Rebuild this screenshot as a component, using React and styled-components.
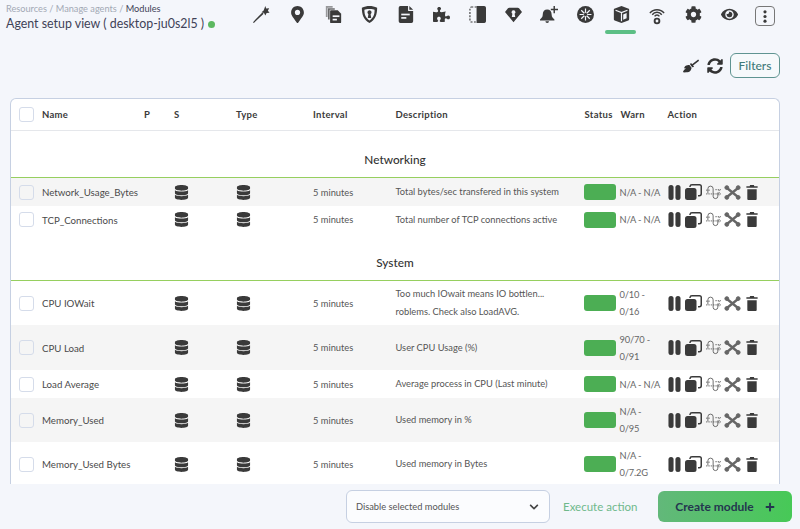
import React from 'react'
import styled, { createGlobalStyle } from 'styled-components'
import { FaDatabase, FaMapMarkerAlt, FaPuzzlePiece, FaCog, FaEye, FaBroom, FaSyncAlt, FaPlus, FaChevronDown } from 'react-icons/fa'

const Global = createGlobalStyle`
  html, body { margin: 0; padding: 0; }
  body {
    background: #f4f6fb;
    font-family: Lato, "Open Sans", sans-serif;
    color: #3b3b3b;
  }
  * { box-sizing: border-box; }
`

// small hand drawn icons for what the icon packs don't have
const Wand = () => (
  <svg viewBox="0 0 20 20" width="17" height="17" fill="currentColor">
    <path d="M1 20l-1-1L11 7.500l1.500 1.500z" />
    <path d="M14.500 0l1 3 3.500-.5-1.500 3 2 2.500-3.500.3-1.500 3-1.500-3-3-1 2.500-2z" />
  </svg>
)
const Docs = () => (
  <svg viewBox="0 0 20 20" width="17" height="17" fill="currentColor">
    <path d="M1 0h8v2H3v11H1z" opacity=".5" />
    <path d="M3.500 2.500h8v2H5.500V16h-2z" opacity=".75" />
    <path d="M7 5h8l4 4v10a1 1 0 0 1-1 1H7a1 1 0 0 1-1-1V6a1 1 0 0 1 1-1z" />
    <rect x="9" y="11" width="8" height="2" fill="#f4f6fb" />
    <rect x="9" y="15" width="5" height="2" fill="#f4f6fb" />
  </svg>
)
const Shield = () => (
  <svg viewBox="0 0 20 20" width="17" height="17" fill="currentColor">
    <path fillRule="evenodd" d="M10 0c3 0 6 .8 9 2 0 8-2 14-9 18C3 16 1 10 1 2c3-1.200 6-2 9-2zm0 3.500c-3 0-5 .6-6 1 0 6 1.500 9.500 6 12.500 4.500-3 6-6.500 6-12.500-1-.4-3-1-6-1z" />
    <path d="M10 5a2.500 2.500 0 0 1 1.300 4.600L12 14H8l.7-4.400A2.500 2.500 0 0 1 10 5z" />
  </svg>
)
const FileDoc = () => (
  <svg viewBox="0 0 20 20" width="17" height="17" fill="currentColor">
    <path d="M4 0h8l1 0v5a1 1 0 0 0 1 1h5v12a2 2 0 0 1-2 2H4a2 2 0 0 1-2-2V2a2 2 0 0 1 2-2z" />
    <path d="M14.500 0L19 4.500h-4.500z" />
    <rect x="5" y="9" width="10" height="2" fill="#f4f6fb" />
    <rect x="5" y="13" width="6" height="2" fill="#f4f6fb" />
  </svg>
)
const HalfBox = () => (
  <svg viewBox="0 0 18 18" width="17" height="17" fill="currentColor">
    <rect x="1" y="1" width="16" height="16" rx="1.500" fill="none" stroke="currentColor" strokeWidth="1.200" strokeDasharray="2 1.500" />
    <path d="M8 0h8a2 2 0 0 1 2 2v14a2 2 0 0 1-2 2H8z" />
  </svg>
)
const DiamondKey = () => (
  <svg viewBox="0 0 20 20" width="17" height="17" fill="currentColor">
    <path fillRule="evenodd" d="M5 2h10a2 2 0 0 1 1.500.7L20 7 10 19 0 7l3.500-4.300A2 2 0 0 1 5 2zm5 3a2.300 2.300 0 0 0-1.300 4.200L8 13h4l-.7-3.800A2.300 2.300 0 0 0 10 5z" />
  </svg>
)
const BellPlus = () => (
  <svg viewBox="0 0 20 20" width="18" height="18" fill="currentColor">
    <path d="M8 4c3 0 5 2 5 6 0 2 1 3 3 5v1H0v-1c2-2 3-3 3-5 0-4 2-6 5-6z" />
    <path d="M6 17h4a2 2 0 0 1-4 0z" />
    <path d="M15 0h1.600v3H20v1.600h-3.400V8H15V4.600h-3V3h3z" />
  </svg>
)
const Wheel = () => (
  <svg viewBox="0 0 20 20" width="17" height="17">
    <circle cx="10" cy="10" r="10" fill="currentColor" />
    <g stroke="#f4f6fb" strokeWidth="1.400">
      <path d="M10 3v14M3 10h14M5 5l10 10M15 5L5 15" />
    </g>
    <circle cx="10" cy="10" r="2" fill="currentColor" />
  </svg>
)
const Cube = () => (
  <svg viewBox="0 0 20 20" width="17" height="17" fill="currentColor">
    <path d="M10 0l8.500 3.300a1 1 0 0 1 .5.700v11.500a1.500 1.500 0 0 1-1 1.500l-8 3-8-3a1.500 1.500 0 0 1-1-1.500V4a1 1 0 0 1 .5-.7z" />
    <path d="M3 5l7 2.800L17 5M10 7.800V18" fill="none" stroke="#f4f6fb" strokeWidth="1.400" />
    <path d="M12 10l4-1.700v6.200l-4 1.700z" fill="#f4f6fb" />
  </svg>
)
const WifiGear = () => (
  <svg viewBox="0 0 20 24" width="16" height="19" fill="none" stroke="currentColor" strokeWidth="1.800">
    <path d="M1 9a11.500 11.500 0 0 1 18 0" />
    <path d="M4 11a7.500 7.500 0 0 1 12 0" />
    <path d="M7 13a3.500 3.500 0 0 1 6 0" />
    <circle cx="10" cy="19" r="3" strokeWidth="2.400" />
  </svg>
)
const Pause = () => (
  <svg viewBox="0 0 14 16" width="13" height="15" fill="currentColor">
    <rect x="0.500" y="0" width="5.500" height="16" rx="2.700" />
    <rect x="8" y="0" width="5.500" height="16" rx="2.700" />
  </svg>
)
const CloneIcon = () => (
  <svg viewBox="0 0 17 16" width="17" height="16" fill="currentColor">
    <path d="M5 3v-.5A2 2 0 0 1 7 .750h7.500a1.800 1.800 0 0 1 1.750 2v7a2 2 0 0 1-2 2H13" fill="none" stroke="currentColor" strokeWidth="1.500" />
    <rect x="0" y="4" width="11.500" height="12" rx="2.500" />
  </svg>
)
const Wave = () => (
  <svg viewBox="0 0 18 16" width="17" height="15" fill="none" stroke="#555" strokeWidth=".9">
    <path d="M1 9.500h16" strokeDasharray="1.500 1" />
    <path d="M1 5.500h5" strokeDasharray="1.500 1" />
    <path d="M3 9V4a2.800 2.800 0 0 1 5.600 0v8a2.500 2.500 0 0 0 5 0V8" />
    <path d="M11 5h6M15 5v6" strokeDasharray="1.500 1" />
  </svg>
)
const Cross = () => (
  <svg viewBox="0 0 17 15" width="17" height="15" fill="#666" stroke="#666">
    <path d="M3 3l11 9M14 3L3 12" strokeWidth="2.400" />
    <circle cx="2.800" cy="2.600" r="1.900" />
    <circle cx="14.200" cy="2.600" r="1.900" />
    <circle cx="2.800" cy="12.400" r="1.900" />
    <circle cx="14.200" cy="12.400" r="1.900" />
  </svg>
)
const Trash = () => (
  <svg viewBox="0 0 12 16" width="12" height="15" fill="currentColor">
    <path d="M4 0h4l.5 1.200H12v1.800H0V1.200h3.500z" />
    <path d="M1 4.500h10V15a1 1 0 0 1-1 1H2a1 1 0 0 1-1-1z" />
  </svg>
)
const Dots = () => (
  <svg viewBox="0 0 4 14" width="4" height="13" fill="currentColor">
    <circle cx="2" cy="2" r="1.700" />
    <circle cx="2" cy="7" r="1.700" />
    <circle cx="2" cy="12" r="1.700" />
  </svg>
)

const Page = styled.div`
  height: 529px;
  width: 800px;
  display: flex;
  flex-direction: column;
  overflow: hidden;
`
const Header = styled.header`
  display: flex;
  justify-content: space-between;
  padding: 0 17px 0 6px;
  height: 53px;
  flex: none;
`
const TitleBlock = styled.div`
  padding-top: 3px;
`
const Crumbs = styled.div`
  font-size: 9.200px;
  line-height: 12px;
  color: #a3a9b5;
  b { font-weight: 400; color: #3f4257; }
`
const Title = styled.h1`
  margin: 0;
  font-size: 12.400px;
  line-height: 18px;
  font-weight: 400;
  color: #3f4257;
  display: flex;
  align-items: center;
  gap: 4px;
`
const Dot = styled.span`
  width: 7px;
  height: 7px;
  border-radius: 50%;
  background: #5cb860;
`
const Nav = styled.nav`
  display: flex;
`
const NavItem = styled.div`
  width: 36px;
  height: 34px;
  padding-top: 6px;
  display: flex;
  justify-content: center;
  color: #3a3a3a;
  font-size: 17px;
  position: relative;
  ${p => p.$active && `
    &::after {
      content: '';
      position: absolute;
      bottom: 0;
      left: 2px;
      right: 3px;
      height: 4px;
      border-radius: 2px;
      background: #5cbf85;
    }
  `}
`
const MenuBox = styled.div`
  width: 20px;
  height: 20px;
  border: 1.500px solid #777;
  border-radius: 4px;
  display: flex;
  align-items: center;
  justify-content: center;
  color: #3a3a3a;
`
const Tools = styled.div`
  height: 45px;
  flex: none;
  padding: 0 20px 0 0;
  display: flex;
  justify-content: flex-end;
  align-items: flex-start;
  gap: 7px;
  color: #333;
`
const ToolIcon = styled.span`
  font-size: 16px;
  width: 17px;
  height: 25px;
  display: flex;
  align-items: center;
  justify-content: center;
`
const FilterButton = styled.button`
  width: 50px;
  height: 25px;
  padding: 0;
  background: #f6f9fb;
  border: 1.500px solid #5f9491;
  border-radius: 6px;
  color: #3f7a78;
  font: 500 12px Lato, sans-serif;
`
const Main = styled.main`
  flex: 1;
  min-height: 0;
  padding: 0 20px 0 10px;
  overflow: hidden;
`
const Card = styled.section`
  background: #fff;
  border: 1px solid #c6d0e2;
  border-bottom: 0;
  border-radius: 6px 6px 0 0;
  height: 100%;
  overflow: hidden;
`
const columns = '31px 102px 30px 62px 77px 82.500px 189px 36px 47px 1fr'
const HeadRow = styled.div`
  display: grid;
  grid-template-columns: ${columns};
  align-items: center;
  height: 32px;
  border-bottom: 1px solid #e5e7eb;
  font-size: 9.500px;
  font-weight: 700;
  letter-spacing: .3px;
  color: #3b3b3b;
`
const Section = styled.div`
  height: ${p => p.$h}px;
  padding-top: ${p => p.$top}px;
  text-align: center;
  font-size: 11.800px;
  line-height: 14px;
  font-weight: 500;
  color: #333;
  border-bottom: 1px solid #96cf5f;
`
const Row = styled.div`
  display: grid;
  grid-template-columns: ${columns};
  align-items: center;
  height: ${p => p.$h}px;
  background: ${p => (p.$gray ? '#f5f5f5' : '#fff')};
  font-size: 9.300px;
  color: #555;
`
const CheckCell = styled.div`
  padding-left: 8px;
`
const Check = styled.span`
  display: block;
  width: 15px;
  height: 15px;
  background: #fff;
  border: 1.500px solid #d5dcea;
  border-radius: 3px;
  ${p => p.$muted && 'background: #f5f5f5;'}
`
const Name = styled.div`
  font-size: 9.700px;
  color: #4a4a4a;
`
const IconCell = styled.div`
  color: #3a3a3a;
  font-size: 15px;
  line-height: 0;
`
const Desc = styled.div`
  line-height: 18px;
  padding-right: 6px;
`
const Status = styled.span`
  display: block;
  width: 32px;
  height: 16px;
  margin-left: -1px;
  border-radius: 3px;
  background: #4cae54;
`
const Warn = styled.div`
  line-height: 17px;
  width: 42px;
  margin-left: -1px;
  letter-spacing: -.15px;
  color: #666;
`
const Actions = styled.div`
  display: flex;
  align-items: center;
  margin-left: -3px;
  color: #3a3a3a;
  svg { flex: none; }
`
const ActionSlot = styled.span`
  width: 19.500px;
  display: flex;
  justify-content: center;
`
const Footer = styled.footer`
  height: 45px;
  flex: none;
  background: #f4f6fb;
  display: flex;
  align-items: center;
  justify-content: flex-end;
  padding: 0 8px 0 0;
`
const Select = styled.div`
  width: 204px;
  height: 33px;
  padding: 0 10px 0 9px;
  background: #fbfcfe;
  border: 1px solid #c6d0e2;
  border-radius: 6px;
  display: flex;
  align-items: center;
  justify-content: space-between;
  font-size: 9.300px;
  color: #555;
  svg { color: #444; font-size: 10px; }
`
const ExecuteLink = styled.span`
  margin: 0 21px 0 13px;
  width: 74px;
  white-space: nowrap;
  font-size: 11.500px;
  color: #6fb98b;
`
const CreateButton = styled.button`
  width: 134px;
  height: 31px;
  border: 0;
  border-radius: 6px;
  background: linear-gradient(90deg, #62b87a, #47c957);
  display: flex;
  align-items: center;
  justify-content: center;
  gap: 11px;
  color: #24364f;
  font: 700 12px Lato, sans-serif;
  svg { font-size: 10px; }
`

const headers = ['', 'Name', 'P', 'S', 'Type', 'Interval', 'Description', 'Status', 'Warn', 'Action']

const navIcons = [
  <Wand />, <FaMapMarkerAlt />, <Docs />, <Shield />, <FileDoc />, <FaPuzzlePiece />, <HalfBox />,
  <DiamondKey />, <BellPlus />, <Wheel />, <Cube />, <WifiGear />, <FaCog />, <FaEye />,
]

const actionIcons = [<Pause />, <CloneIcon />, <Wave />, <Cross />, <Trash />]

function ModuleRow({ name, desc, warn, h, gray }) {
  return (
    <Row $h={h} $gray={gray}>
      <CheckCell><Check $muted={gray} /></CheckCell>
      <Name>{name}</Name>
      <div />
      <IconCell><FaDatabase /></IconCell>
      <IconCell><FaDatabase /></IconCell>
      <div>5 minutes</div>
      <Desc>{desc}</Desc>
      <Status />
      <Warn>{warn}</Warn>
      <Actions>
        {actionIcons.map((icon, i) => <ActionSlot key={i}>{icon}</ActionSlot>)}
      </Actions>
    </Row>
  )
}

export default function App() {
  return (
    <Page>
      <Global />
      <Header>
        <TitleBlock>
          <Crumbs>Resources / Manage agents / <b>Modules</b></Crumbs>
          <Title>Agent setup view ( desktop-ju0s2l5 ) <Dot /></Title>
        </TitleBlock>
        <Nav>
          {navIcons.map((icon, i) => (
            <NavItem key={i} $active={i === 10}>{icon}</NavItem>
          ))}
          <NavItem><MenuBox><Dots /></MenuBox></NavItem>
        </Nav>
      </Header>
      <Tools>
        <ToolIcon><FaBroom /></ToolIcon>
        <ToolIcon><FaSyncAlt /></ToolIcon>
        <FilterButton>Filters</FilterButton>
      </Tools>
      <Main>
        <Card>
          <HeadRow>
            {headers.map((h, i) => (
              i === 0 ? <CheckCell key={i}><Check /></CheckCell> : <div key={i}>{h}</div>
            ))}
          </HeadRow>
          <Section $h={47} $top={22}>Networking</Section>
          <ModuleRow h={28} gray name="Network_Usage_Bytes" desc="Total bytes/sec transfered in this system" warn="N/A - N/A" />
          <ModuleRow h={27} name="TCP_Connections" desc="Total number of TCP connections active" warn="N/A - N/A" />
          <Section $h={48} $top={23}>System</Section>
          <ModuleRow h={44} name="CPU IOWait" desc="Too much IOwait means IO bottlen... roblems. Check also LoadAVG." warn="0/10 - 0/16" />
          <ModuleRow h={45} gray name="CPU Load" desc="User CPU Usage (%)" warn="90/70 - 0/91" />
          <ModuleRow h={28} name="Load Average" desc="Average process in CPU (Last minute)" warn="N/A - N/A" />
          <ModuleRow h={44} gray name="Memory_Used" desc="Used memory in %" warn="N/A - 0/95" />
          <ModuleRow h={44} name="Memory_Used Bytes" desc="Used memory in Bytes" warn="N/A - 0/7.2G" />
        </Card>
      </Main>
      <Footer>
        <Select>Disable selected modules <FaChevronDown /></Select>
        <ExecuteLink>Execute action</ExecuteLink>
        <CreateButton>Create module <FaPlus /></CreateButton>
      </Footer>
    </Page>
  )
}
